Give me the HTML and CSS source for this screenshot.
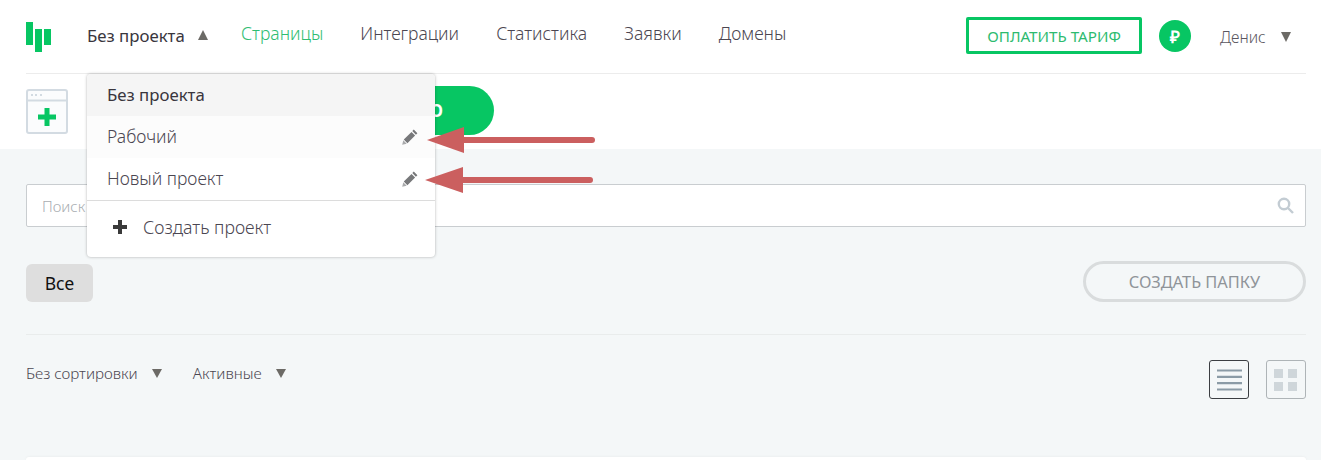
FILE: index.html
```html
<!DOCTYPE html>
<html lang="ru">
<head>
<meta charset="utf-8">
<title>Проекты</title>
<link rel="stylesheet" href="styles.css">
</head>
<body>
<header class="head">
  <div class="topbar">
    <svg class="logo" width="25" height="30" viewBox="0 0 25 30"><path fill="#07c663" d="M0 0h7v23H0zM9 7h7v23H9zM18 7h7v16h-7z"/></svg>
    <div class="project">Без проекта<span class="tri up"></span></div>
    <nav class="nav">
      <a class="nav-link active">Страницы</a>
      <a class="nav-link">Интеграции</a>
      <a class="nav-link">Статистика</a>
      <a class="nav-link">Заявки</a>
      <a class="nav-link">Домены</a>
    </nav>
    <a class="pay">ОПЛАТИТЬ ТАРИФ</a>
    <span class="rub">₽</span>
    <div class="user">Денис<span class="tri down"></span></div>
  </div>
  <div class="actionbar">
    <svg class="newpage" width="42" height="45" viewBox="0 0 42 45">
      <rect x="1" y="1" width="40" height="43" rx="2" fill="#fbfcfd" stroke="#d3dbe2" stroke-width="2"/>
      <path d="M1 11.500h40" stroke="#d3dbe2" stroke-width="2"/>
      <path d="M5 6h2M9 6h2M14 6h2" stroke="#d3dbe2" stroke-width="2"/>
      <path d="M21 19v18M12 28h18" stroke="#07c663" stroke-width="5"/>
    </svg>
    <a class="create">О</a>
  </div>
</header>

<main class="content">
  <div class="search">
    <span class="search-ph">Поиск</span>
    <svg width="17" height="17" viewBox="0 0 17 17" fill="none" stroke="#c3ccd3" stroke-width="2.4"><circle cx="7" cy="7" r="5.2"/><path d="M11 11l5 5"/></svg>
  </div>
  <div class="folders">
    <span class="chip">Все</span>
    <a class="folder-btn">СОЗДАТЬ ПАПКУ</a>
  </div>
  <div class="filters">
    <span class="filter">Без сортировки<span class="tri down small"></span></span>
    <span class="filter">Активные<span class="tri down small"></span></span>
    <span class="views">
      <span class="view on">
        <svg width="25" height="22" viewBox="0 0 25 22"><path d="M0 3h25M0 9.300h25M0 15.600h25M0 22h25" transform="translate(0 -1.500)" stroke="#8b9ba6" stroke-width="2.200"/></svg>
      </span>
      <span class="view">
        <svg width="24" height="22" viewBox="0 0 24 22"><path fill="#cfd6da" d="M0 0h9v9H0zM14 0h9v9h-9zM0 13h9v9H0zM14 13h9v9h-9z"/></svg>
      </span>
    </span>
  </div>
  <div class="card"></div>
</main>

<div class="menu">
  <div class="menu-item current">Без проекта</div>
  <div class="menu-item hover">Рабочий
    <svg class="pencil" width="16" height="16" viewBox="0 0 16 16"><path fill="#77787a" d="M11.800.6l3.600 3.600-1.500 1.500-3.600-3.600zM9.500 2.900l3.600 3.600-7.700 7.700-3.600-3.600z"/><path fill="#a9aaac" d="M1.300 11.300l3.400 3.400-4.500 1.100z"/></svg>
  </div>
  <div class="menu-item">Новый проект
    <svg class="pencil" width="16" height="16" viewBox="0 0 16 16"><path fill="#77787a" d="M11.800.6l3.600 3.600-1.500 1.500-3.600-3.600zM9.500 2.900l3.600 3.600-7.700 7.700-3.600-3.600z"/><path fill="#a9aaac" d="M1.300 11.300l3.400 3.400-4.500 1.100z"/></svg>
  </div>
  <div class="menu-add"><span class="plus"></span>Создать проект</div>
</div>

<svg class="arrow arrow-one" width="170" height="28" viewBox="0 0 170 28"><path d="M36 14h129" stroke="#cb5f5f" stroke-width="6" stroke-linecap="round"/><path fill="#cb5f5f" d="M0 14L37 1v26z"/></svg>
<svg class="arrow arrow-two" width="170" height="28" viewBox="0 0 170 28"><path d="M36 14h129" stroke="#cb5f5f" stroke-width="6" stroke-linecap="round"/><path fill="#cb5f5f" d="M0 14L38 1v26z"/></svg>
</body>
</html>
```
FILE: styles.css
```css
* { box-sizing: border-box; }
html, body { margin: 0; height: 460px; overflow: hidden; }
body { position: relative; background: #f4f7f8; font-family: "Noto Sans", "Open Sans", sans-serif; font-weight: 300; color: #4b4651; font-size: 17.500px; }

.head { background: #fff; height: 149px; padding: 0 15px 0 26px; }
.topbar { height: 74px; display: flex; align-items: center; border-bottom: 1px solid #ececec; }
.logo { margin-top: 1px; flex: none; }
.project { margin-left: 36px; width: 154px; margin-top: -3px; color: #39363d; font-size: 16.800px; font-weight: 400; display: flex; align-items: center; }
.tri { display: inline-block; width: 0; height: 0; border-left: 5.500px solid transparent; border-right: 5.500px solid transparent; }
.tri.up { border-bottom: 10px solid #6c6a66; margin-left: 13px; }
.tri.down { border-top: 10px solid #6c6a66; margin-left: 15px; }
.tri.small { border-left-width: 5px; border-right-width: 5px; border-top-width: 9px; margin-left: 14px; }
.nav { display: flex; gap: 37px; flex: 1; margin-top: -7px; }
.nav-link { color: #4b4651; }
.nav-link.active { color: #2fbd72; }
.pay { width: 176px; height: 37px; margin-top: -2px; border: 3px solid #07c663; border-radius: 2px; display: flex; align-items: center; justify-content: center; color: #2dbb6f; font-size: 15.200px; font-weight: 400; }
.rub { width: 32px; height: 32px; margin-left: 17px; margin-top: -1px; border-radius: 50%; background: #07c663; color: #fff; font-family: "Liberation Sans", sans-serif; font-weight: 700; font-size: 17px; display: flex; align-items: center; justify-content: center; }
.user { margin-left: 29px; width: 86px; font-size: 15.600px; display: flex; align-items: center; color: #5a5660; }

.actionbar { display: flex; align-items: center; height: 75px; }
.newpage { flex: none; margin-top: -1px; }
.create { width: 210px; height: 49px; margin-left: 216px; margin-top: -3px; padding-right: 51px; border-radius: 0 25px 25px 0; background: linear-gradient(90deg, #fff 0, #07c663 8px); color: #fff; font-size: 17px; font-weight: 700; display: flex; align-items: center; justify-content: flex-end; }

.content { padding: 35px 15px 0 26px; }
.search { height: 43px; background: #fff; border: 1px solid #c9cdd0; border-radius: 2px; display: flex; align-items: center; justify-content: space-between; padding: 0 11px 0 15px; }
.search-ph { color: #a9adb1; font-size: 15px; }
.folders { display: flex; justify-content: space-between; align-items: center; margin-top: 33px; height: 42px; }
.chip { width: 67px; height: 38px; background: #dedede; border-radius: 6px; display: flex; align-items: center; justify-content: center; color: #111; font-size: 17.500px; font-weight: 400; margin-top: 3px; }
.folder-btn { width: 223px; height: 41px; border: 3px solid #d9dcdd; border-radius: 21px; display: flex; align-items: center; justify-content: center; color: #8f9499; font-size: 16.400px; font-weight: 400; }
.filters { display: flex; align-items: flex-start; margin-top: 32px; border-top: 1px solid #e9ecec; padding-top: 25px; }
.filter { font-size: 15.200px; margin-right: 31px; display: flex; align-items: center; height: 26px; }
.views { margin-left: auto; display: flex; gap: 17px; }
.view { width: 40px; height: 39px; border: 1px solid #aeb4b7; border-radius: 3px; display: flex; align-items: center; justify-content: center; }
.view.on { border-color: #3b3e42; }
.card { height: 3px; margin-top: 58px; background: #fff; border-radius: 6px 6px 0 0; box-shadow: 0 0 3px rgba(0,0,0,.06); }

.menu { position: absolute; left: 87px; top: 74px; width: 348px; height: 183px; background: #fff; border-radius: 4px; box-shadow: 0 0 3px rgba(0,0,0,.3); overflow: hidden; }
.menu-item { height: 42px; padding: 0 17px 3px 20px; display: flex; align-items: center; justify-content: space-between; color: #4b4651; }
.menu-item.current { background: #f5f5f5; color: #39363d; font-size: 16.800px; font-weight: 400; padding-bottom: 1px; }
.menu-item.hover { background: #fcfcfc; }
.pencil { position: relative; top: 1.500px; }
.menu-add { border-top: 1px solid #dcdcdc; height: 57px; padding: 0 0 4px 26px; display: flex; align-items: center; font-size: 17.700px; color: #4b4651; }
.plus { width: 14px; height: 14px; margin-right: 16px; background: linear-gradient(#3a3a3a,#3a3a3a) center/14px 4px no-repeat, linear-gradient(#3a3a3a,#3a3a3a) center/4px 14px no-repeat; }

.arrow { position: absolute; }
.arrow-one { left: 427px; top: 126px; }
.arrow-two { left: 425px; top: 166px; }
```
